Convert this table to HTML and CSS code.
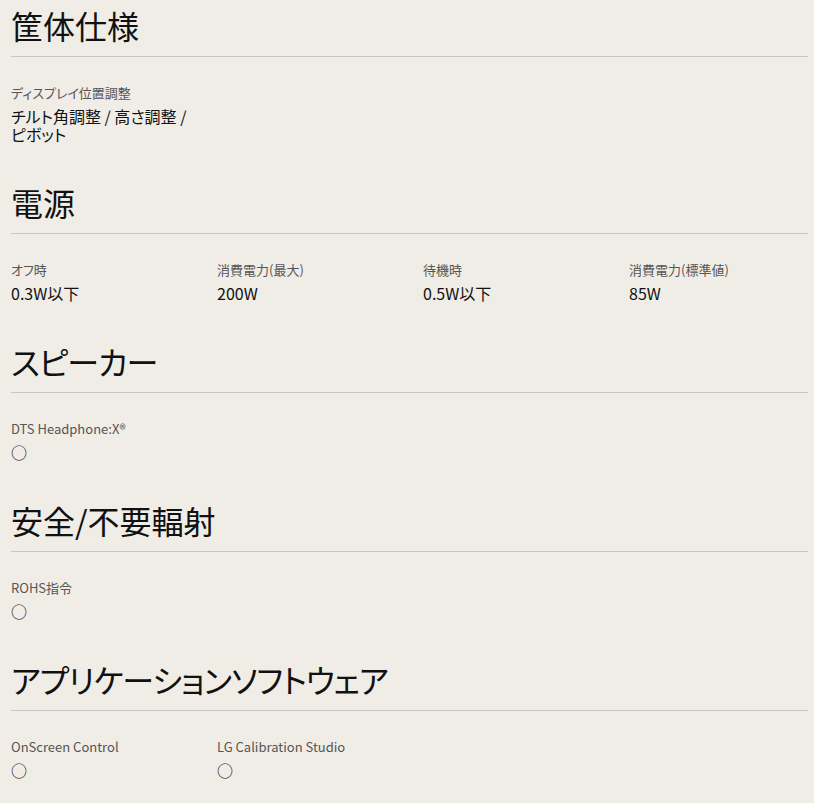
FILE: index.html
```html
<!DOCTYPE html>
<html lang="ja">
<head>
<meta charset="utf-8">
<title>仕様</title>
<link rel="stylesheet" href="styles.css">
</head>
<body>
<main class="specs">
  <section class="spec-section">
    <h2 class="spec-title">筐体仕様</h2>
    <div class="spec-grid">
      <div class="spec-item">
        <div class="spec-label">ディスプレイ位置調整</div>
        <div class="spec-value">チルト角調整 / 高さ調整 / ピボット</div>
      </div>
    </div>
  </section>
  <section class="spec-section">
    <h2 class="spec-title">電源</h2>
    <div class="spec-grid">
      <div class="spec-item">
        <div class="spec-label">オフ時</div>
        <div class="spec-value">0.3W以下</div>
      </div>
      <div class="spec-item">
        <div class="spec-label">消費電力(最大)</div>
        <div class="spec-value">200W</div>
      </div>
      <div class="spec-item">
        <div class="spec-label">待機時</div>
        <div class="spec-value">0.5W以下</div>
      </div>
      <div class="spec-item">
        <div class="spec-label">消費電力(標準値)</div>
        <div class="spec-value">85W</div>
      </div>
    </div>
  </section>
  <section class="spec-section">
    <h2 class="spec-title spec-title--kana">スピーカー</h2>
    <div class="spec-grid">
      <div class="spec-item">
        <div class="spec-label">DTS Headphone:X®</div>
        <div class="spec-value">○</div>
      </div>
    </div>
  </section>
  <section class="spec-section">
    <h2 class="spec-title">安全/不要輻射</h2>
    <div class="spec-grid">
      <div class="spec-item">
        <div class="spec-label">ROHS指令</div>
        <div class="spec-value">○</div>
      </div>
    </div>
  </section>
  <section class="spec-section">
    <h2 class="spec-title spec-title--kana">アプリケーションソフトウェア</h2>
    <div class="spec-grid">
      <div class="spec-item">
        <div class="spec-label">OnScreen Control</div>
        <div class="spec-value">○</div>
      </div>
      <div class="spec-item">
        <div class="spec-label">LG Calibration Studio</div>
        <div class="spec-value">○</div>
      </div>
    </div>
  </section>
</main>
</body>
</html>
```
FILE: styles.css
```css
html, body {
  margin: 0;
  padding: 0;
  background: #f0ece6;
}
body {
  font-family: "Noto Sans CJK JP", "Noto Sans", sans-serif;
  color: #111;
}
.specs {
  padding: 5px 6px 0 11px;
}
.spec-title {
  margin: 0;
  font-size: 32px;
  font-weight: 400;
  line-height: 40px;
  padding-bottom: 11px;
  border-bottom: 1px solid #c9c5bf;
  font-feature-settings: "palt";
  color: #111;
}
.spec-title--kana {
  letter-spacing: -1px;
}
.spec-grid {
  display: grid;
  grid-template-columns: repeat(4, 190px);
  column-gap: 16px;
  padding-top: 26px;
  padding-bottom: 39px;
}
.spec-label {
  font-size: 13px;
  line-height: 20px;
  color: #555;
  font-feature-settings: "palt";
}
.spec-value {
  margin-top: 4px;
  font-size: 16px;
  line-height: 18px;
  color: #111;
  font-feature-settings: "palt";
}
```
